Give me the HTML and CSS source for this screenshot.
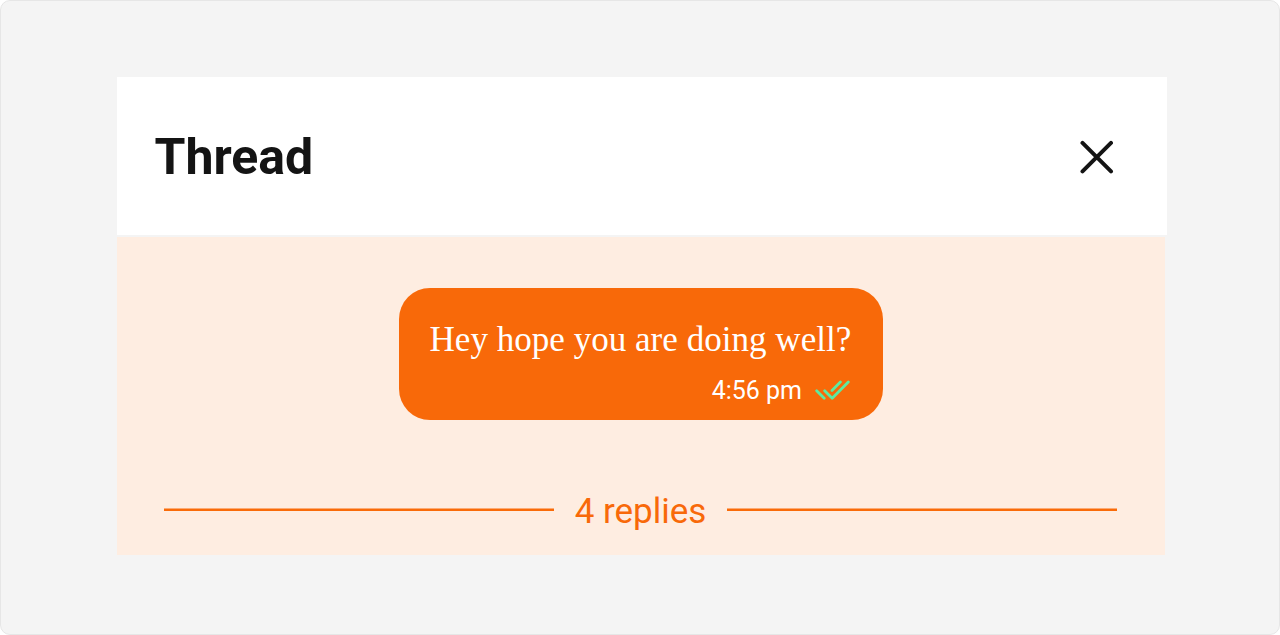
FILE: index.html
```html
<!DOCTYPE html>
<html lang="en">
<head>
<meta charset="utf-8">
<title>Thread</title>
<link rel="stylesheet" href="styles.css">
</head>
<body>
<main class="frame">
  <section class="thread">
    <header class="header">
      <h1 class="title">Thread</h1>
      <svg class="close" viewBox="0 0 34 34" role="img" aria-label="Close"><path d="M2.500 2.900 31 31.400M31 2.900 2.500 31.400"/></svg>
    </header>
    <div class="body">
      <div class="bubble">
        <p class="message">Hey hope you are doing well?</p>
        <div class="meta">
          <span class="time">4:56 pm</span>
          <svg class="ticks" viewBox="0 0 36 22" aria-hidden="true"><path d="M1.700 10.700 9.200 18.200M9.700 10.700 17.200 18.200 33.300 2.100M17 10.500 25.400 2.100"/></svg>
        </div>
      </div>
      <div class="replies">
        <svg class="line" viewBox="0 0 390 3" aria-hidden="true"><path d="M0 1.750H390"/></svg>
        <span class="count">4 replies</span>
        <svg class="line" viewBox="0 0 390 3" aria-hidden="true"><path d="M0 1.750H390"/></svg>
      </div>
    </div>
  </section>
</main>
</body>
</html>
```
FILE: styles.css
```css
* { box-sizing: border-box; }
body { margin: 0; background: #fff; font-family: Roboto, sans-serif; }
.frame { width: 1280px; height: 635px; padding: 76px 112px 0 115px; background: #f4f4f4; border: 1px solid #e6e6e6; border-radius: 10px; }
.thread { width: 1051px; }
.header { height: 158px; display: flex; align-items: center; justify-content: space-between; margin-left: 1px; padding: 2px 53px 0 37.5px; background: #fff; }
.title { margin: 0; font-size: 50px; line-height: 60px; font-weight: 700; color: #141414; }
.close { width: 34px; height: 34px; fill: none; stroke: #141414; stroke-width: 4; stroke-linecap: round; }
.body { width: 1048px; height: 318px; margin: 2px 0 0 1px; padding-top: 51px; background: #feede1; }
.bubble { width: 483.5px; height: 132px; margin-left: 282px; padding: 31px 31.5px 0 30.5px; border-radius: 31px; background: #f86909; color: #fff; }
.message { margin: 0; font: 35.1px/42px "Liberation Serif", serif; white-space: nowrap; }
.meta { display: flex; justify-content: flex-end; align-items: center; gap: 13px; height: 32px; margin-top: 14px; }
.time { font-size: 25px; line-height: 32px; }
.ticks { width: 36px; height: 22px; fill: none; stroke: #5deaa0; stroke-width: 2.8; stroke-linecap: round; stroke-linejoin: round; }
.replies { display: flex; align-items: flex-start; justify-content: space-between; width: 953px; height: 42px; margin: 70px 0 0 47px; }
.line { width: 390px; height: 3px; margin-top: 17px; fill: none; stroke: #f96b09; stroke-width: 2.5; }
.count { font-size: 35px; line-height: 42px; color: #f86909; }
.bubble + .replies { margin-top: 71px; }
```
